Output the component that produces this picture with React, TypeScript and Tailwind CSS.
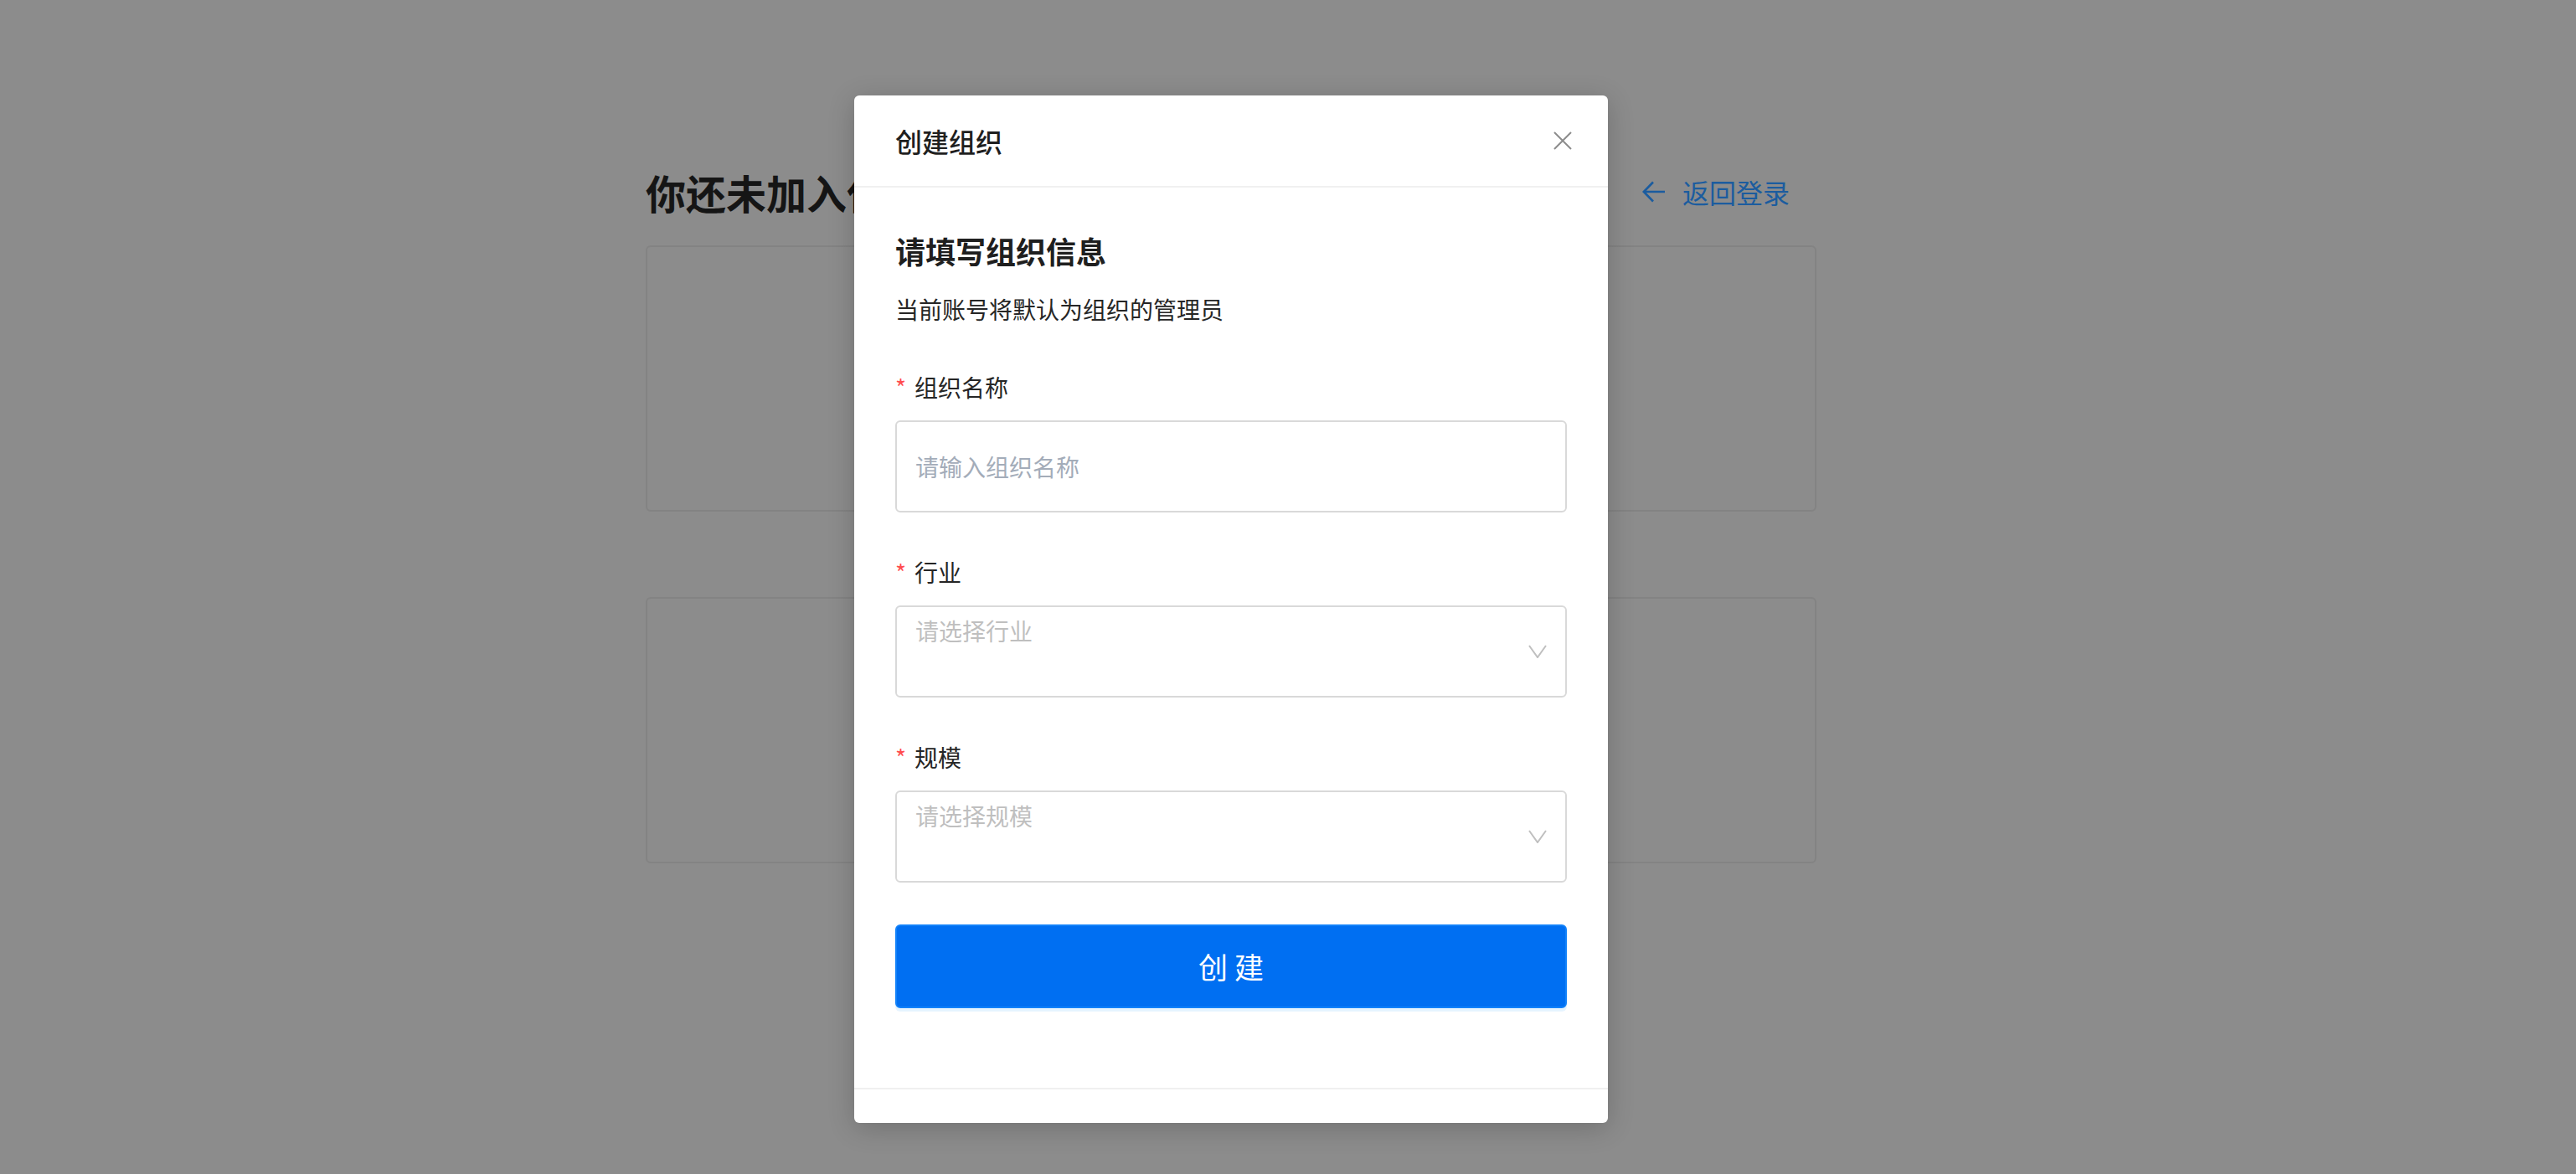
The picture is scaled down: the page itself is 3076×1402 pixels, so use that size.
function RequiredLabel({ text }: { text: string }) {
  return (
    <div className="mb-[18px] flex h-[44px] items-center text-[28px] leading-[44px] text-[#262626]">
      <span className="w-[23px] text-[28px] text-[#ff4d4f]">*</span>
      <span>{text}</span>
    </div>
  );
}

function SelectBox({ placeholder }: { placeholder: string }) {
  return (
    <div className="relative h-[110px] rounded-[6px] border-2 border-[#d9d9d9] bg-white px-[22px] pt-[6px]">
      <span className="block text-[28px] leading-[44px] text-[#bfbfbf]">{placeholder}</span>
      <svg
        className="absolute right-[22px] top-[45px]"
        width="22"
        height="16"
        viewBox="0 0 22 16"
        fill="none"
        stroke="#bfbfbf"
        strokeWidth="2"
      >
        <path d="M1 1 L11 15 L21 1" />
      </svg>
    </div>
  );
}

export default function App() {
  return (
    <div className="relative h-[1402px] w-full overflow-hidden bg-[#8c8c8c] font-['Noto_Sans_CJK_SC','Noto_Sans',sans-serif]">
      {/* page behind the mask */}
      <div className="ml-[771px] w-[1398px] pt-[195px]">
        <div className="flex h-[68px] items-center justify-between pr-[32px]">
          <h1 className="text-[48px] font-bold leading-[68px] text-[#151515]">你还未加入任何组织</h1>
          <a className="flex items-center gap-[20px] text-[32px] leading-[44px] text-[#1b5c9f]">
            <svg width="28" height="26" viewBox="0 0 28 26" fill="none" stroke="currentColor" strokeWidth="2.6">
              <path d="M27 13 H2 M13 1.5 L1.8 13 L13 24.5" />
            </svg>
            <span>返回登录</span>
          </a>
        </div>
        <div className="mt-[30px] h-[318px] rounded-[6px] border-2 border-[#838383]" />
        <div className="mt-[102px] h-[318px] rounded-[6px] border-2 border-[#838383]" />
      </div>

      {/* modal */}
      <div className="absolute left-[1020px] top-[114px] w-[900px] rounded-[6px] bg-white shadow-[0_6px_32px_rgba(0,0,0,0.2)]">
        <div className="flex h-[110px] items-center justify-between border-b-2 border-[#f0f0f0] pl-[49px] pr-[42px]">
          <span className="text-[32px] font-medium leading-[44px] text-[#1f1f1f]">创建组织</span>
          <svg width="24" height="24" viewBox="0 0 24 24" fill="none" stroke="#8c8c8c" strokeWidth="2">
            <path d="M2 2 L22 22 M22 2 L2 22" />
          </svg>
        </div>

        <div className="px-[49px] pb-[95px] pt-[50px]">
          <h2 className="text-[36px] font-bold leading-[50px] text-[#1f1f1f]">请填写组织信息</h2>
          <p className="mt-[23px] text-[28px] leading-[44px] text-[#262626]">当前账号将默认为组织的管理员</p>

          <div className="mt-[49px]">
            <RequiredLabel text="组织名称" />
            <div className="flex h-[110px] items-center rounded-[6px] border-2 border-[#d9d9d9] bg-white px-[22px]">
              <span className="text-[28px] leading-[44px] text-[#a3acb9]">请输入组织名称</span>
            </div>
          </div>

          <div className="mt-[49px]">
            <RequiredLabel text="行业" />
            <SelectBox placeholder="请选择行业" />
          </div>

          <div className="mt-[49px]">
            <RequiredLabel text="规模" />
            <SelectBox placeholder="请选择规模" />
          </div>

          <button className="mt-[50px] flex h-[100px] w-full items-center justify-center rounded-[6px] border-2 border-[#1282fa] bg-[#006ff2] text-[35px] leading-[44px] text-white shadow-[0_4px_0_rgba(5,145,255,0.1)]">
            创 建
          </button>
        </div>

        <div className="h-[42px] border-t-2 border-[#f0f0f0]" />
      </div>
    </div>
  );
}
